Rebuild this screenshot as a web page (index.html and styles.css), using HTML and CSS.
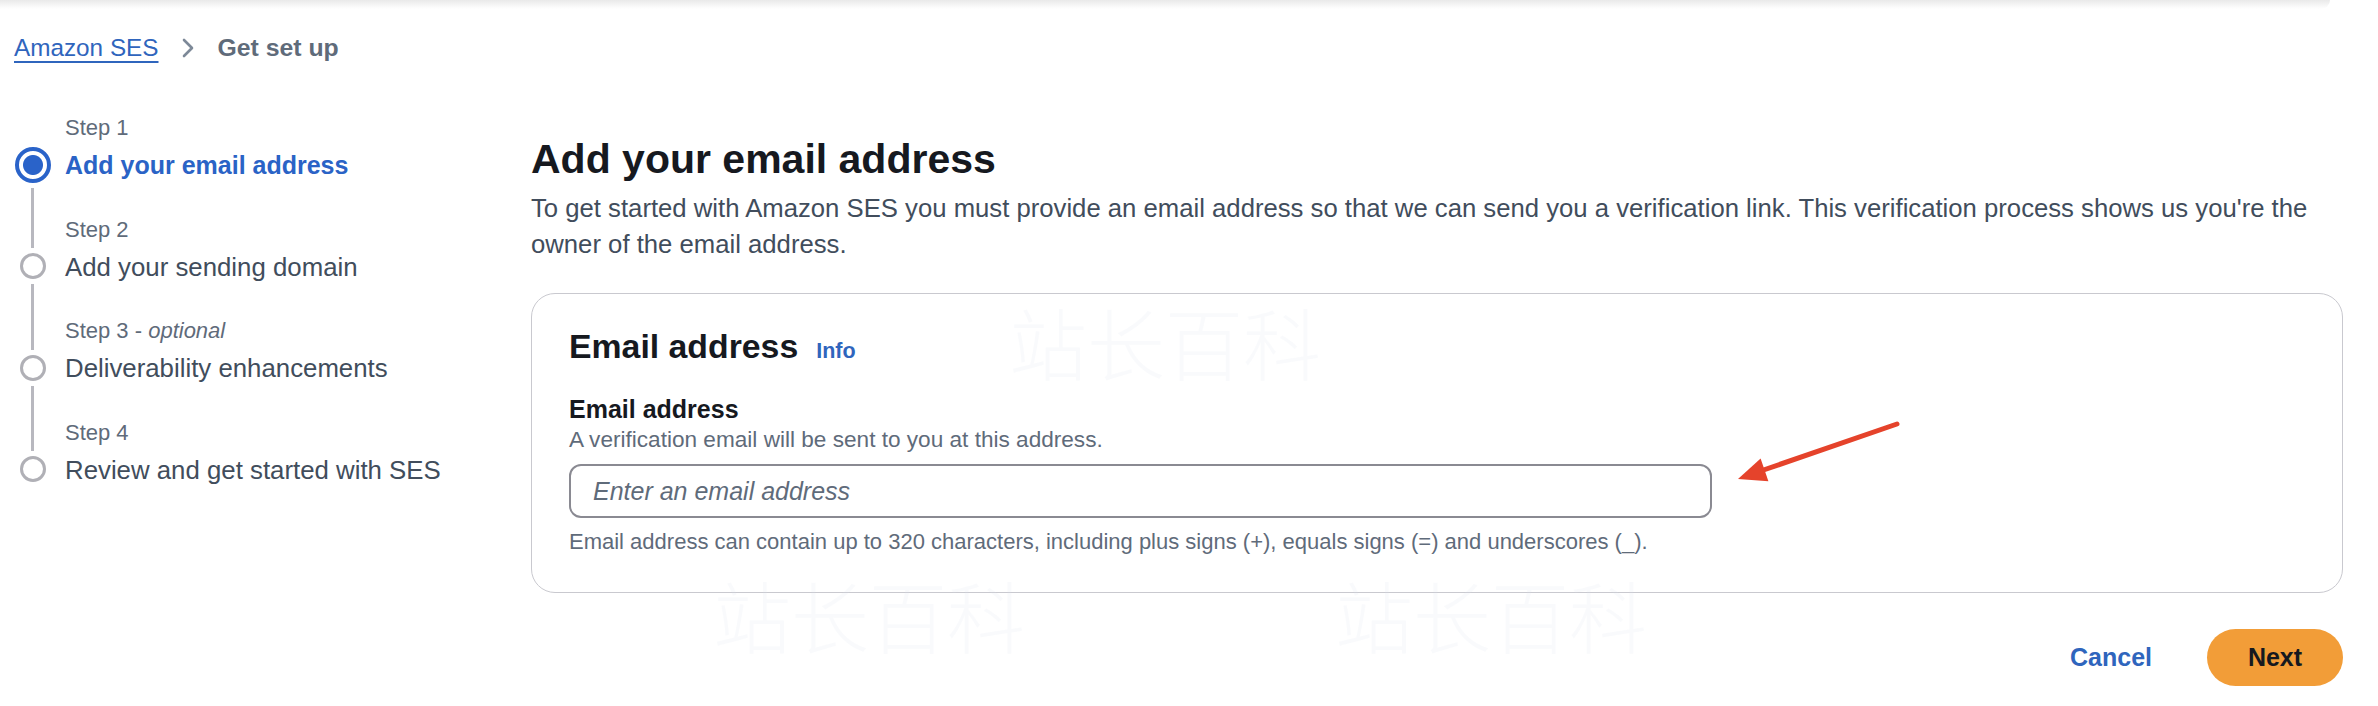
FILE: index.html
```html
<!DOCTYPE html>
<html lang="en">
<head>
<meta charset="utf-8">
<title>Get set up - Amazon SES</title>
<link rel="stylesheet" href="styles.css">
</head>
<body>
<div class="topshade"></div>
<nav class="crumbs">
  <a class="crumb-link">Amazon SES</a>
  <svg class="chev" viewBox="0 0 14 20" width="14" height="20"><path d="M3 2 L11 10 L3 18" fill="none" stroke="#7d8998" stroke-width="2.6" stroke-linecap="round" stroke-linejoin="round"/></svg>
  <span class="crumb-current">Get set up</span>
</nav>
<div class="layout">
  <ol class="steps">
    <li class="step active">
      <div class="rail"><span class="up"></span><span class="dot"></span><span class="down"></span></div>
      <div class="step-text"><div class="step-label">Step 1</div><div class="step-title">Add your email address</div></div>
    </li>
    <li class="step">
      <div class="rail"><span class="up"></span><span class="dot"></span><span class="down"></span></div>
      <div class="step-text"><div class="step-label">Step 2</div><div class="step-title">Add your sending domain</div></div>
    </li>
    <li class="step">
      <div class="rail"><span class="up"></span><span class="dot"></span><span class="down"></span></div>
      <div class="step-text"><div class="step-label">Step 3 - <i>optional</i></div><div class="step-title">Deliverability enhancements</div></div>
    </li>
    <li class="step">
      <div class="rail"><span class="up"></span><span class="dot"></span><span class="down"></span></div>
      <div class="step-text"><div class="step-label">Step 4</div><div class="step-title">Review and get started with SES</div></div>
    </li>
  </ol>
  <main class="main">
    <h1 class="title">Add your email address</h1>
    <p class="desc">To get started with Amazon SES you must provide an email address so that we can send you a verification link. This verification process shows us you're the owner of the email address.</p>
    <section class="card">
      <h2 class="card-title">Email address <a class="info">Info</a></h2>
      <label class="field-label" for="email">Email address</label>
      <div class="field-desc">A verification email will be sent to you at this address.</div>
      <input class="input" id="email" type="text" placeholder="Enter an email address">
      <div class="constraint">Email address can contain up to 320 characters, including plus signs (+), equals signs (=) and underscores (_).</div>
    </section>
    <div class="actions">
      <button class="cancel">Cancel</button>
      <button class="next">Next</button>
    </div>
  </main>
</div>
<svg class="arrow" viewBox="0 0 175 75" width="175" height="75">
  <line x1="167" y1="9" x2="32" y2="55.5" stroke="#e5432b" stroke-width="5" stroke-linecap="round"/>
  <polygon points="8,64 30.6,43.4 38.4,66.2" fill="#e5432b"/>
</svg>
<div class="wm wm3">站长百科</div>
<div class="wm wm4">站长百科</div>
<div class="wm wm5">站长百科</div>
</body>
</html>
```
FILE: styles.css
```css
* { box-sizing: border-box; margin: 0; padding: 0; }
body {
  margin: 0;
  width: 2378px;
  height: 706px;
  overflow: hidden;
  position: relative;
  background: #fff;
  font-family: "Liberation Sans", Arial, sans-serif;
  color: #16191f;
}
.topshade {
  height: 9px;
  width: 2330px;
  background: linear-gradient(#e9e9e9, #f7f7f7 60%, #fff);
  border-bottom-right-radius: 24px;
}
.crumbs {
  display: flex;
  align-items: center;
  margin-top: 24px;
  padding-left: 14px;
  height: 30px;
  font-size: 24.3px;
  line-height: 30px;
}
.crumb-link {
  color: #2f65bd;
  text-decoration: underline;
  text-decoration-thickness: 2px;
  text-underline-offset: 5px;
}
.chev { margin: 0 23px 0 22px; }
.crumb-current { font-weight: 700; color: #5f6b7a; font-size: 24.8px; }

.layout { display: flex; margin-top: 50px; }

.steps { list-style: none; width: 531px; flex: none; }
.step { display: grid; grid-template-columns: 65px 1fr; height: 101.5px; }
.step:last-child { height: auto; }
.rail { display: flex; flex-direction: column; align-items: center; }
.up { width: 3px; height: 33.7px; background: #b8b8bf; }
.step:first-child .up { background: transparent; }
.dot {
  width: 26px; height: 26px;
  margin-top: 5px;
  border: 3px solid #b0b0b6;
  border-radius: 50%;
  background: #fff;
}
.active .dot {
  width: 36px; height: 36px;
  margin-top: 0;
  border: 4px solid #2a63c9;
  background: radial-gradient(circle, #2a63c9 0 9.5px, #fff 10.5px);
}
.down { width: 3px; flex: 1; margin-top: 5px; background: #b8b8bf; }
.step:last-child .down { display: none; }
.step-label { font-size: 22px; line-height: 30px; color: #5f6b7a; }
.step-title { font-size: 25.8px; line-height: 30px; margin-top: 7px; color: #414d5c; white-space: nowrap; }
.active .step-title { font-weight: 700; color: #2a63c6; font-size: 25px; }

.main { width: 1812px; flex: none; }
.title { font-size: 41px; line-height: 50px; font-weight: 700; margin-top: 21px; }
.desc { font-size: 25.7px; line-height: 35.5px; color: #414d5c; margin-top: 7px; }
.card {
  margin-top: 31px;
  border: 1px solid #c9c9cf;
  border-radius: 24px;
  padding: 32px 37px 36px;
}
.card-title {
  display: flex;
  align-items: baseline;
  gap: 18px;
  font-size: 33.8px;
  line-height: 40px;
  font-weight: 700;
}
.info { font-size: 21.5px; font-weight: 700; color: #2f65bd; }
.field-label { display: block; font-size: 25px; line-height: 30px; font-weight: 700; margin-top: 23px; }
.field-desc { font-size: 22.6px; line-height: 28px; color: #5f6b7a; margin-top: 2px; }
.input {
  display: block;
  width: 1143px;
  height: 54px;
  margin-top: 10px;
  border: 2px solid #8a8a92;
  border-radius: 12px;
  padding: 0 22px;
  font-family: "Liberation Sans", Arial, sans-serif;
  font-size: 25px;
  font-style: italic;
  color: #16191f;
  background: #fff;
  outline: none;
}
.input::placeholder { color: #5f6b7a; font-style: italic; }
.constraint { font-size: 22px; line-height: 28px; color: #5f6b7a; margin-top: 10px; }

.actions { display: flex; justify-content: flex-end; align-items: center; margin-top: 36px; }
.cancel {
  background: none;
  border: 0;
  font-family: "Liberation Sans", Arial, sans-serif;
  font-size: 25px;
  font-weight: 700;
  color: #2f65bd;
  margin-right: 55px;
}
.next {
  width: 136px;
  height: 57px;
  border: 0;
  border-radius: 29px;
  background: #f29d38;
  font-family: "Liberation Sans", Arial, sans-serif;
  font-size: 25px;
  font-weight: 700;
  color: #16191f;
}

.arrow { position: absolute; left: 1730px; top: 415px; }

.wm {
  position: absolute;
  font-family: "Noto Sans CJK SC", sans-serif;
  font-weight: 300;
  font-size: 78px;
  line-height: 90px;
  color: rgba(215, 225, 235, 0.16);
  pointer-events: none;
  white-space: nowrap;
}
.wm3 { left: 1009px; top: 296px; }
.wm4 { left: 713px; top: 569px; }
.wm5 { left: 1335px; top: 569px; }
```
